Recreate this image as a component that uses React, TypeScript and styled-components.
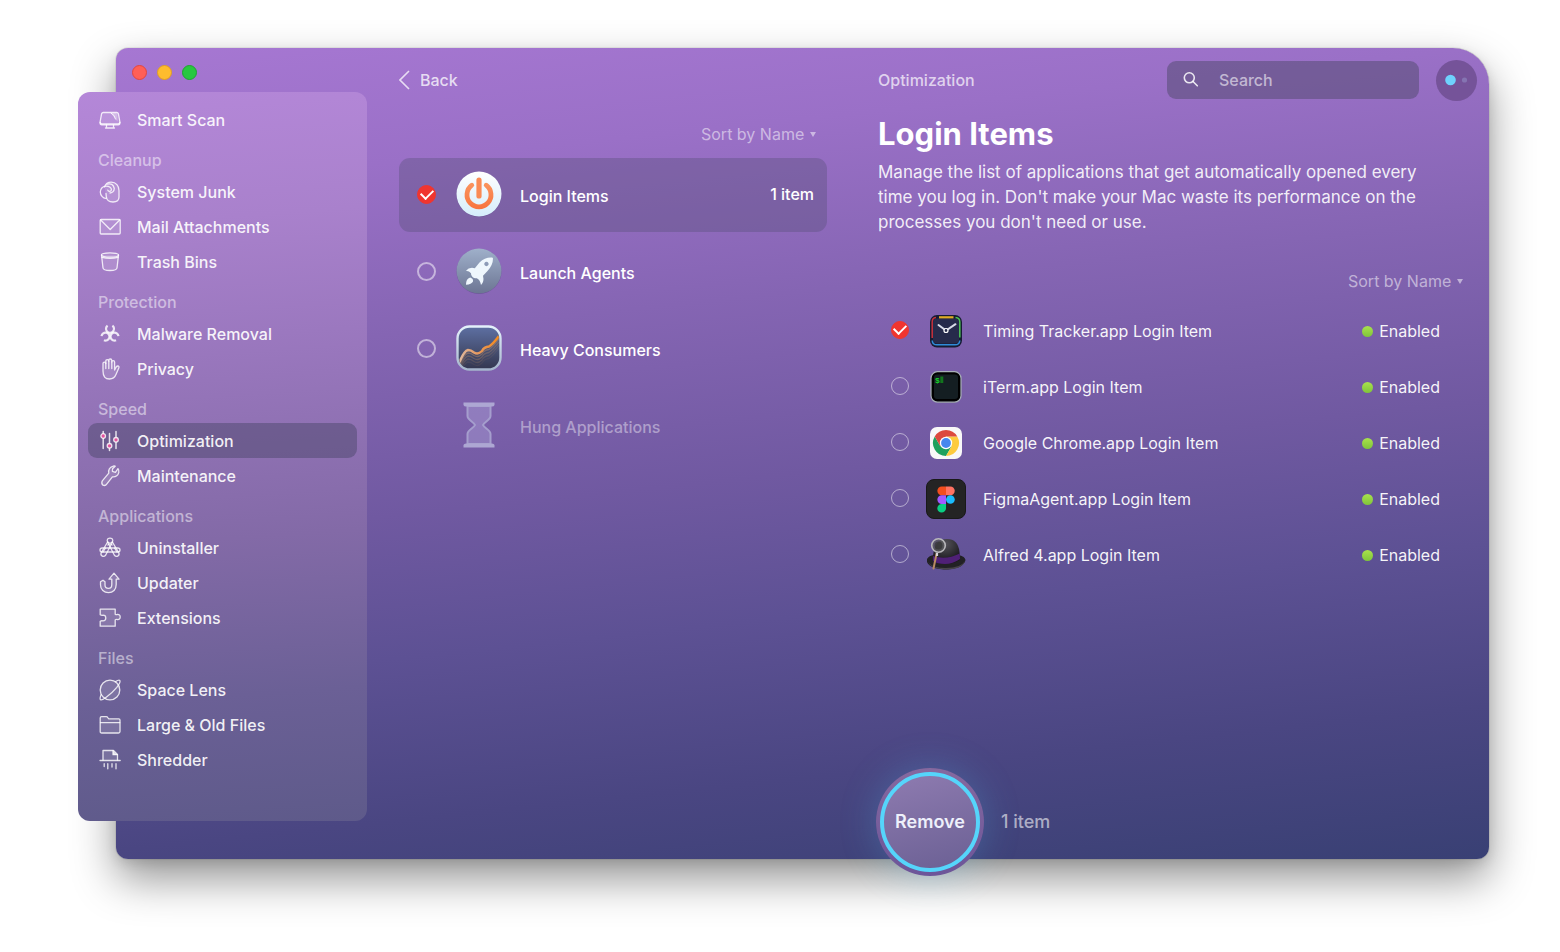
import React, { useState } from "react";
import styled, { createGlobalStyle, css } from "styled-components";

const GlobalStyle = createGlobalStyle`
  * { box-sizing: border-box; }
  body {
    margin: 0;
    background: #fff;
    color: #fff;
    font-family: Inter, "Liberation Sans", sans-serif;
    font-size: 16px;
    line-height: 20px;
  }
  button, input, select { font: inherit; color: inherit; }
`;

const Page = styled.div`
  min-height: 100vh;
  padding: 48px 71px 93px 116px;
  display: flex;
`;

const AppWindow = styled.div`
  flex: 1;
  min-width: 0;
  display: grid;
  grid-template-columns: 251px minmax(0, 511fr) minmax(0, 611fr);
  border-radius: 12px 36px 12px 12px;
  background: linear-gradient(174deg, #a677d2 0%, #9a70c7 15%, #8565b3 33%, #7059a1 52%, #5d5194 67%, #4a4682 84%, #394074 100%);
  box-shadow: 0 0 1px rgba(0, 0, 0, 0.6), 0 20px 44px rgba(0, 0, 0, 0.42), 0 4px 12px rgba(0, 0, 0, 0.1);
`;

const SideColumn = styled.div`
  display: flex;
  flex-direction: column;
  padding-bottom: 38px;
`;

const TrafficLights = styled.div`
  display: flex;
  gap: 10px;
  padding: 17px 16px 12px;
`;

const Light = styled.button<{ $fill: string; $edge: string }>`
  width: 15px;
  height: 15px;
  padding: 0;
  border: 1px solid ${(p) => p.$edge};
  border-radius: 50%;
  background: ${(p) => p.$fill};
`;

const Sidebar = styled.nav`
  flex: 1;
  margin-left: -38px;
  padding: 10px 10px 42px;
  border-radius: 12px;
  background: linear-gradient(176deg, #b487d8 0%, #a981cc 18%, #9b78bf 34%, #836aa7 61%, #6b6096 82%, #5e5a8a 100%);
`;

const GroupTitle = styled.h2`
  margin: 0;
  padding: 14px 10px 5px;
  font-size: 16px;
  font-weight: 500;
  line-height: 18px;
  color: rgba(255, 255, 255, 0.5);
`;

const NavItem = styled.button<{ $active?: boolean }>`
  display: flex;
  align-items: center;
  gap: 16px;
  width: 100%;
  height: 35px;
  padding: 0 11px;
  border: 0;
  border-radius: 9px;
  background: ${(p) => (p.$active ? "rgba(64, 64, 96, 0.42)" : "transparent")};
  color: rgba(255, 255, 255, 0.92);
  font-weight: 500;
  text-align: left;
  svg { flex: none; overflow: visible; }
`;

const ListColumn = styled.section`
  padding: 0 51px 0 32px;
`;

const HeaderBar = styled.header`
  display: flex;
  align-items: center;
  height: 64px;
  color: rgba(255, 255, 255, 0.7);
  font-weight: 500;
`;

const BackButton = styled.button`
  display: flex;
  align-items: center;
  gap: 10px;
  padding: 0;
  border: 0;
  background: none;
  color: rgba(255, 255, 255, 0.75);
  font-weight: 500;
`;

const SortBar = styled.div<{ $inset: number }>`
  display: flex;
  justify-content: flex-end;
  align-items: center;
  height: 44px;
  padding-right: ${(p) => p.$inset}px;
  color: rgba(255, 255, 255, 0.5);
`;

const SortLabel = styled.label`
  display: flex;
  align-items: center;
  gap: 5px;
`;

const SortSelect = styled.select`
  appearance: none;
  padding: 0;
  border: 0;
  background: none;
  color: rgba(255, 255, 255, 0.52);
  option { color: #222; }
`;

const CategoryList = styled.ul`
  display: grid;
  gap: 3px;
  margin: 2px 0 0;
  padding: 0;
  list-style: none;
`;

const CategoryRow = styled.label<{ $active?: boolean; $muted?: boolean }>`
  display: grid;
  grid-template-columns: 20px 46px 1fr auto;
  align-items: center;
  height: 74px;
  padding: 0 13px 2px 18px;
  border-radius: 11px;
  font-weight: 500;
  ${(p) => p.$active && css`background: rgba(78, 74, 110, 0.32);`}
  ${(p) => p.$muted && css`color: rgba(255, 255, 255, 0.42);`}
`;

const CategoryIcon = styled.span`
  grid-column: 2;
  display: flex;
  margin-left: 19px;
  width: 46px;
`;

const CategoryName = styled.span`
  padding: 3px 0 0 37px;
`;

const Tick = styled.input`
  appearance: none;
  display: grid;
  place-items: center;
  width: 19px;
  height: 19px;
  margin: 0;
  border: 2px solid rgba(255, 255, 255, 0.5);
  border-radius: 50%;
  &:checked {
    border-color: #f0352f;
    border-width: 1px;
    background: #f0352f;
  }
  &:checked::after {
    content: "";
    width: 6px;
    height: 10px;
    margin-top: -3px;
    border: solid #fff;
    border-width: 0 2px 2px 0;
    transform: rotate(45deg);
  }
`;

const DetailColumn = styled.section`
  display: flex;
  flex-direction: column;
  min-width: 0;
`;

const SearchBox = styled.label`
  display: flex;
  align-items: center;
  gap: 20px;
  width: 252px;
  height: 38px;
  margin-left: auto;
  padding: 0 16px;
  border-radius: 9px;
  background: rgba(82, 74, 112, 0.52);
`;

const SearchInput = styled.input`
  flex: 1;
  min-width: 0;
  padding: 0;
  border: 0;
  outline: 0;
  background: none;
  font-weight: 500;
  &::placeholder { color: rgba(255, 255, 255, 0.58); }
`;

const AssistantButton = styled.button`
  display: flex;
  align-items: center;
  justify-content: center;
  width: 41px;
  height: 41px;
  margin: 0 12px 0 17px;
  padding: 0;
  border: 0;
  border-radius: 50%;
  background: #755399;
`;

const Title = styled.h1`
  margin: 4px 0 8px;
  font-size: 31px;
  line-height: 36px;
  font-weight: 700;
`;

const Description = styled.p`
  margin: 0;
  max-width: 560px;
  padding: 0 10px 24px 0;
  font-size: 17px;
  line-height: 25px;
  color: rgba(255, 255, 255, 0.9);
`;

const ItemList = styled.ul`
  margin: 0;
  padding: 0;
  list-style: none;
`;

const ItemRow = styled.label`
  display: flex;
  align-items: center;
  height: 56px;
  padding: 0 49px 0 13px;
  color: rgba(255, 255, 255, 0.94);
  ${Tick} { border-width: 1px; margin-bottom: 3px; width: 18px; height: 18px; }
`;

const AppIcon = styled.span`
  display: flex;
  margin: 0 17px;
`;

const Status = styled.span`
  display: flex;
  align-items: center;
  gap: 6px;
  margin-left: auto;
  &::before {
    content: "";
    width: 11px;
    height: 11px;
    border-radius: 50%;
    background: linear-gradient(#a9e24c, #7fc53a);
  }
`;

const ActionBar = styled.footer`
  display: flex;
  align-items: center;
  gap: 17px;
  margin: auto 0 -17px -2px;
  font-size: 18px;
  font-weight: 500;
  color: rgba(255, 255, 255, 0.58);
`;

const RemoveButton = styled.button`
  width: 108px;
  height: 108px;
  padding: 4px;
  border: 0;
  border-radius: 50%;
  background: linear-gradient(#85699f, #6c5599);
  box-shadow: 0 0 36px rgba(80, 190, 240, 0.26);
`;

const RemoveFace = styled.span`
  display: grid;
  place-items: center;
  width: 100%;
  height: 100%;
  border: 4px solid #55d5fb;
  border-radius: 50%;
  background: linear-gradient(165deg, #8e7bb0, #6b6094);
  color: #eef0fb;
  font-size: 18px;
  font-weight: 600;
`;

const Line = ({ children }: { children: React.ReactNode }) => (
  <svg width="22" height="22" viewBox="0 0 22 22" fill="rgba(255,255,255,0.12)" stroke="rgba(255,255,255,0.82)" strokeWidth="1.3" strokeLinejoin="round" strokeLinecap="round" aria-hidden="true">
    {children}
  </svg>
);

const navIcons: Record<string, React.ReactNode> = {
  "Smart Scan": (
    <Line>
      <path d="M4.2 3.5H17.8Q19 3.5 19.4 4.7L21 13.5Q21 15.7 19.2 15.8H2.8Q1 15.7 1 13.5L2.6 4.7Q3 3.5 4.2 3.5Z" />
      <path d="M1.2 13.3Q1.5 15 3 15H19Q20.5 15 20.8 13.3M7.5 16V18.3M14.5 16V18.3M6.5 19H15.5" fill="none" />
      <path d="M11.5 4L18.5 12.5V5L16.8 3.8Z" fill="rgba(255,255,255,.35)" stroke="none" />
      <path d="M12 4Q16 6 16.5 10" fill="none" strokeWidth="1" />
    </Line>
  ),
  "System Junk": (
    <Line>
      <path d="M5.5 6C6.5 3 9 1.2 12.3 1.2C17 1.2 20 5 20 9.5V16C20 19.2 17.5 21 14 21C10 21 7.6 19 7.3 15.8L7 12.5" />
      <path d="M7.2 17.2C4.5 17.8 1.3 14.5 1.3 11C1.3 7.5 4 5.2 7 5.2C10.5 5.2 12.6 7 12.4 8.8C12 10.8 9.3 11 8.8 9.2M8 3.2Q14 1.5 15.3 7.5Q15 11.5 11 12" fill="none" />
    </Line>
  ),
  "Mail Attachments": (
    <Line>
      <rect x="1.2" y="3.5" width="20" height="14.5" rx="1" />
      <path d="M1.7 4L11.2 13.5L20.7 4" fill="none" />
    </Line>
  ),
  "Trash Bins": (
    <Line>
      <path d="M2.5 4L4 17Q4.3 19.5 11 19.5Q17.7 19.5 18 17L19.5 4" />
      <ellipse cx="11" cy="4" rx="8.5" ry="2.2" />
      <path d="M3 6.3Q11 8.5 19 6.3" fill="none" />
    </Line>
  ),
  "Malware Removal": (
    <Line>
      <g fill="none" strokeWidth="2.2" strokeLinecap="butt">
        <path d="M8.6 2.6A4 4 0 1 0 13.4 2.6" />
        <path d="M8.6 2.6A4 4 0 1 0 13.4 2.6" transform="rotate(120 11 11)" />
        <path d="M8.6 2.6A4 4 0 1 0 13.4 2.6" transform="rotate(240 11 11)" />
      </g>
    </Line>
  ),
  Privacy: (
    <Line>
      <path d="M4 13V5.6Q4 4.2 5.4 4.2Q6.8 4.2 6.8 5.6V3.2Q6.8 1.7 8.3 1.7Q9.8 1.7 9.8 3.2V2.4Q9.8 1 11.3 1Q12.8 1 12.8 2.4V4Q12.8 2.7 14.2 2.7Q15.6 2.7 15.6 4V12L17.2 9Q18.2 7.6 19.6 8.2Q20.4 8.7 19.9 9.8L17 16.5Q15.2 21 10.5 21Q4 21 4 13Z" />
      <path d="M6.8 5V10.5M9.8 3V10.5M12.8 4V10.5" fill="none" />
    </Line>
  ),
  Optimization: (
    <Line>
      <path d="M4.2 1.5V4M4.2 8.5V18.5M10.5 3.5V13.5M10.5 18V20.5M17 1.5V7.5M17 12V18.5" strokeWidth="1.5" />
      <g fill="#e2549f">
        <circle cx="4.2" cy="6" r="2.3" />
        <circle cx="10.5" cy="15.8" r="2.3" />
        <circle cx="17" cy="9.8" r="2.3" />
      </g>
    </Line>
  ),
  Maintenance: (
    <Line>
      <path d="M14.2 1.2Q8.8 3 9.8 8.2L3.3 15.8Q2 18.6 4 20.2Q6.4 21.2 7.9 18.9L13.4 11.8Q18.4 12.2 19.8 7.6Q20.2 5.2 19 3.6L16.4 7.4L13.4 6.4L13.6 3.8L16.2 1.2Q15.2 .8 14.2 1.2Z" />
    </Line>
  ),
  Uninstaller: (
    <Line>
      <g fill="none">
        <path d="M8.6 2Q11 .4 13.4 2Q14.2 3.4 13.4 5L6.6 18.2Q5 20 3 18.9Q1.3 17.8 2.2 15.8L8.6 5Q7.8 3.4 8.6 2Z" />
        <path d="M13.4 5L19.8 15.8Q20.7 17.8 19 18.9Q17 20 15.4 18.2L8.6 5" />
        <path d="M3.2 11H18.8Q21 11 21 13Q21 15 18.8 15H3.2Q1 15 1 13Q1 11 3.2 11Z" />
        <path d="M8.8 5L13.2 8M13.2 5L8.8 8M4 15L6.5 11M18 15L15.5 11" />
      </g>
    </Line>
  ),
  Updater: (
    <Line>
      <path d="M15 1.2L20 7.2H17.2V12.5C17.2 17.5 14 20.7 9.5 20.7C5 20.7 1.5 17.5 1.5 13V9.8L4 8.2L6 9.8V13C6 15.2 7.5 16.4 9.5 16.4C11.8 16.4 12.8 15 12.8 12.5V7.2H10Z" />
    </Line>
  ),
  Extensions: (
    <Line>
      <path d="M1.2 2.2H16.2V7.2Q17 7.9 18.2 7.5Q21.2 7.2 21.2 10Q21.2 12.9 18.2 12.5Q17 12.1 16.2 12.9V19.2H1.2V14.2Q2.5 13.5 4 13.9Q6.8 13.7 6.8 10.9Q6.8 8.2 4 8.2Q2.5 8.5 1.2 7.7Z" />
    </Line>
  ),
  "Space Lens": (
    <Line>
      <circle cx="11" cy="11" r="9.8" />
      <path d="M2.2 15.5Q.4 19.5 1.5 20.7Q3 21.6 7.5 18Q13 14 17.8 8.3Q22 3 20.8 1.4Q19.8 .6 16.5 2.6" fill="none" />
    </Line>
  ),
  "Large & Old Files": (
    <Line>
      <path d="M1.2 17.5V4Q1.2 2.7 2.5 2.7H7.3Q8.2 2.7 9 3.8L9.8 4.8H19.8Q21 4.8 21 6V17.5Q21 19 19.5 19H2.7Q1.2 19 1.2 17.5Z" />
      <path d="M1.5 8.7H20.7" />
    </Line>
  ),
  Shredder: (
    <Line>
      <path d="M4 11V1.5H14.5L18.5 5.5V11" />
      <path d="M14 1.7V5.7H18.2" fill="rgba(255,255,255,.8)" />
      <path d="M1 11.5H21.2M5.2 14.7V17.5M8.8 14.7V19.8M13 14.7V18M17 14.7V19.8" fill="none" />
    </Line>
  ),
};

const navGroups: { title?: string; items: string[] }[] = [
  { items: ["Smart Scan"] },
  { title: "Cleanup", items: ["System Junk", "Mail Attachments", "Trash Bins"] },
  { title: "Protection", items: ["Malware Removal", "Privacy"] },
  { title: "Speed", items: ["Optimization", "Maintenance"] },
  { title: "Applications", items: ["Uninstaller", "Updater", "Extensions"] },
  { title: "Files", items: ["Space Lens", "Large & Old Files", "Shredder"] },
];

const PowerIcon = () => (
  <svg width="46" height="46" viewBox="0 0 46 46" aria-hidden="true">
    <defs>
      <linearGradient id="powerDisc" x2="0" y2="1"><stop stopColor="#fff" /><stop offset="1" stopColor="#d5edfb" /></linearGradient>
      <linearGradient id="powerMark" gradientUnits="userSpaceOnUse" x1="0" y1="7" x2="0" y2="38"><stop stopColor="#fb9a64" /><stop offset="1" stopColor="#f8743f" /></linearGradient>
    </defs>
    <circle cx="23" cy="23.4" r="22.5" fill="rgba(50,30,90,.25)" />
    <circle cx="23" cy="23" r="22.5" fill="url(#powerDisc)" />
    <path d="M15.8 14.2A12 12 0 1 0 30.2 14.2" fill="none" stroke="url(#powerMark)" strokeWidth="4.8" strokeLinecap="round" />
    <path d="M23 9V25" fill="none" stroke="#fa8a54" strokeWidth="5.2" strokeLinecap="round" />
  </svg>
);

const RocketIcon = () => (
  <svg width="46" height="46" viewBox="0 0 46 46" aria-hidden="true">
    <defs>
      <linearGradient id="rocketDisc" x2="0" y2="1"><stop stopColor="#9fb0ca" /><stop offset="1" stopColor="#6c7593" /></linearGradient>
    </defs>
    <circle cx="23" cy="23.4" r="22.5" fill="rgba(50,30,90,.3)" />
    <circle cx="23" cy="23" r="22.5" fill="url(#rocketDisc)" />
    <g fill="#eff7fd">
      <path fillRule="evenodd" d="M36 9.5Q29 9 23.5 14.5L18.8 20.2Q13 18.8 10 22.8Q13.5 23 15 25.2Q14.8 27.5 16.5 29Q18.3 30.7 20.8 30.2Q24.2 31.8 25 37Q28.5 34 27 27.8L31.5 23Q37 17 37 10.5Q36.8 9.5 36 9.5ZM30.5 13.8A2.2 2.2 0 1 1 30.4 13.8Z" />
      <path d="M14.2 29.5Q17.5 30.5 17 33.5Q15.5 36.5 10 36.8Q9.8 31 14.2 29.5Z" />
    </g>
  </svg>
);

const ChartIcon = () => (
  <svg width="46" height="46" viewBox="0 0 46 46" aria-hidden="true">
    <defs>
      <linearGradient id="chartFace" x2="0" y2="1"><stop stopColor="#5e70a3" /><stop offset=".55" stopColor="#465073" /><stop offset="1" stopColor="#33364f" /></linearGradient>
      <linearGradient id="chartEdge" x2="0" y2="1"><stop stopColor="#e4f1fb" /><stop offset="1" stopColor="#a5b5cc" /></linearGradient>
      <linearGradient id="chartLine"><stop stopColor="#dfb9a0" /><stop offset=".5" stopColor="#e6975b" /><stop offset="1" stopColor="#f58a1b" /></linearGradient>
      <clipPath id="chartClip"><rect x="3" y="3" width="40" height="40" rx="10" /></clipPath>
    </defs>
    <rect x="1.5" y="1.5" width="43" height="43" rx="12" fill="url(#chartFace)" stroke="url(#chartEdge)" strokeWidth="2.4" />
    <g clipPath="url(#chartClip)" fill="none">
      {[12, 9, 6, 3].map((dy, i) => (
        <path key={dy} d="M3 38Q8 26 12 25Q15 25 18 27.5Q22 30 26 26Q28 22 33 21.5Q37 19 43 11" transform={`translate(0 ${dy})`} stroke="#b98a66" strokeOpacity={0.1 + i * 0.12} strokeWidth="1.3" />
      ))}
      <path d="M3 38Q8 26 12 25Q15 25 18 27.5Q22 30 26 26Q28 22 33 21.5Q37 19 43 11" stroke="url(#chartLine)" strokeWidth="2.4" />
    </g>
  </svg>
);

const HourglassIcon = () => (
  <svg width="46" height="46" viewBox="0 0 46 46" aria-hidden="true">
    <g fill="rgba(200,200,240,.28)" stroke="#a59ecd" strokeWidth="2">
      <path d="M11.5 4H34.5V14C34.5 18 28 20 27 23C28 26 34.5 28 34.5 32V42H11.5V32C11.5 28 18 26 19 23C18 20 11.5 18 11.5 14Z" />
    </g>
    <path d="M7.5 .5H38.5V3Q38 4.5 36 4.5H10Q8 4.5 7.5 3ZM7.5 45.5H38.5V43Q38 41.5 36 41.5H10Q8 41.5 7.5 43Z" fill="#ada7d3" />
  </svg>
);

const TimingIcon = () => (
  <svg width="40" height="40" viewBox="0 0 40 40" aria-hidden="true">
    <rect x="4" y="4" width="32" height="32.5" rx="7" fill="#171c33" />
    <rect x="7" y="7.5" width="26" height="25" rx="4" fill="#262b4b" />
    <g fill="none" strokeWidth="1.5">
      <path d="M6.2 27V11Q6.2 7 10 6.6" stroke="#c8313c" />
      <path d="M13 6.3H27.5" stroke="#e0ac24" strokeWidth="2.2" />
      <path d="M29.5 6.6Q33.8 7 33.8 11V26.5" stroke="#4dc556" />
      <path d="M6.2 29.5Q6.5 33.8 11 33.8H29Q33.5 33.8 33.8 29.5" stroke="#2f8bd8" />
    </g>
    <path d="M12.5 14L20 19.5L29.5 13.2" fill="none" stroke="#d8dce8" strokeWidth="2" strokeLinecap="round" />
    <circle cx="20" cy="19.5" r="2" fill="#262b4b" stroke="#fff" strokeWidth="1.2" />
  </svg>
);

const ItermIcon = () => (
  <svg width="40" height="40" viewBox="0 0 40 40" aria-hidden="true">
    <rect x="5" y="4.7" width="30" height="30.5" rx="6.5" fill="#000" stroke="#a8b0b8" strokeWidth="1.2" />
    <rect x="8" y="7.5" width="24" height="24.5" rx="3" fill="#141e22" />
    <text x="9" y="15.5" fill="#17d22a" fontFamily="Liberation Mono, monospace" fontSize="8" fontWeight="700">$</text>
    <rect x="14.3" y="9.5" width="3" height="6.5" fill="#12751d" />
  </svg>
);

const ChromeIcon = () => (
  <svg width="40" height="40" viewBox="-4 -4 40 40" aria-hidden="true">
    <rect width="32" height="32" rx="7" fill="#f8f8f8" />
    <path d="M4.74 9.5A13 13 0 0 0 16 29L21.63 19.25H10.37Z" fill="#1fa15d" />
    <path d="M27.26 9.5A13 13 0 0 1 16 29L21.63 19.25L16 9.5Z" fill="#fdcb3e" />
    <path d="M4.74 9.5A13 13 0 0 1 27.26 9.5H16L10.37 19.25Z" fill="#dc4a3e" />
    <circle cx="16" cy="16" r="6.2" fill="#fff" />
    <circle cx="16" cy="16" r="4.9" fill="#4688ee" />
  </svg>
);

const FigmaIcon = () => (
  <svg width="40" height="40" viewBox="0 0 40 40" aria-hidden="true">
    <rect x=".5" y=".5" width="39" height="39" rx="7.5" fill="#242424" stroke="#191919" />
    <path d="M15.7 7.5H20V16.2H15.7A4.35 4.35 0 0 1 15.7 7.5Z" fill="#f24e1e" />
    <path d="M20 7.5H24.4A4.35 4.35 0 0 1 24.4 16.2H20Z" fill="#ff7262" />
    <path d="M15.7 16.2H20V24.9H15.7A4.35 4.35 0 0 1 15.7 16.2Z" fill="#a259ff" />
    <circle cx="24.4" cy="20.5" r="4.35" fill="#1abcfe" />
    <path d="M15.7 24.9H20V29.3A4.35 4.35 0 1 1 15.7 24.9Z" fill="#0acf83" />
  </svg>
);

const AlfredIcon = () => (
  <svg width="40" height="40" viewBox="0 0 40 40" aria-hidden="true">
    <defs>
      <radialGradient id="hatCrown" cx=".45" cy=".2" r=".7"><stop stopColor="#55535a" /><stop offset="1" stopColor="#19181c" /></radialGradient>
    </defs>
    <path d="M1 24Q3 20.5 8 20H33Q39 21.5 39.5 25Q38 33 22 34.5Q4 34.5 1 27Z" fill="#222125" />
    <path d="M2 27Q6 33 20 33Q35 33 39 26Q36 34.5 20 34.5Q5 34 2 27Z" fill="#48454b" />
    <path d="M7 22Q8 4 21 4Q32 4 33.5 17L34 25Q28 29 19 29Q11 29 7 26Z" fill="url(#hatCrown)" />
    <path d="M7 21Q20 25.5 33.8 18.5L34 24Q27 29 19 29Q11 29 7 26Z" fill="#4f2077" />
    <path d="M10.5 19L7.5 33.5" stroke="#b98a63" strokeWidth="2" strokeLinecap="round" />
    <circle cx="12.5" cy="10.5" r="6.8" fill="rgba(90,90,92,.75)" stroke="#b9b8bb" strokeWidth="1.6" />
    <circle cx="12.5" cy="10.5" r="4" fill="rgba(30,30,32,.45)" />
    <path d="M11 17.8V21" stroke="#d6d4d8" strokeWidth="2.2" />
  </svg>
);

const categories = [
  { name: "Login Items", icon: <PowerIcon />, count: "1 item" },
  { name: "Launch Agents", icon: <RocketIcon /> },
  { name: "Heavy Consumers", icon: <ChartIcon /> },
  { name: "Hung Applications", icon: <HourglassIcon />, muted: true },
];

const loginItems = [
  { name: "Timing Tracker.app Login Item", icon: <TimingIcon /> },
  { name: "iTerm.app Login Item", icon: <ItermIcon /> },
  { name: "Google Chrome.app Login Item", icon: <ChromeIcon /> },
  { name: "FigmaAgent.app Login Item", icon: <FigmaIcon /> },
  { name: "Alfred 4.app Login Item", icon: <AlfredIcon /> },
];

const Sort = ({ inset, name }: { inset: number; name: string }) => (
  <SortBar $inset={inset}>
    <SortLabel>
      <SortSelect aria-label={name}>
        <option>Sort by Name</option>
      </SortSelect>
      <svg width="6" height="6" viewBox="0 0 6 6" aria-hidden="true"><path d="M0 1H6L3 6Z" fill="currentColor" /></svg>
    </SortLabel>
  </SortBar>
);

export default function App() {
  const [section, setSection] = useState("Optimization");
  return (
    <>
      <GlobalStyle />
      <Page>
        <AppWindow>
          <SideColumn>
            <TrafficLights>
              <Light aria-label="Close" $fill="#ff5f57" $edge="#e2463f" />
              <Light aria-label="Minimize" $fill="#febc2e" $edge="#e09e24" />
              <Light aria-label="Zoom" $fill="#28c840" $edge="#1fa530" />
            </TrafficLights>
            <Sidebar>
              {navGroups.map((group) => (
                <div key={group.items[0]}>
                  {group.title && <GroupTitle>{group.title}</GroupTitle>}
                  {group.items.map((item) => (
                    <NavItem key={item} $active={item === section} onClick={() => setSection(item)}>
                      {navIcons[item]}
                      {item}
                    </NavItem>
                  ))}
                </div>
              ))}
            </Sidebar>
          </SideColumn>

          <ListColumn>
            <HeaderBar>
              <BackButton>
                <svg width="11" height="20" viewBox="0 0 11 20" fill="none" stroke="currentColor" strokeWidth="1.6" aria-hidden="true"><path d="M10 1L1 10L10 19" /></svg>
                Back
              </BackButton>
            </HeaderBar>
            <Sort inset={11} name="Sort categories" />
            <CategoryList>
              {categories.map((c, i) => (
                <li key={c.name}>
                  <CategoryRow $active={i === 0} $muted={c.muted}>
                    {!c.muted && <Tick type="checkbox" defaultChecked={i === 0} />}
                    <CategoryIcon>{c.icon}</CategoryIcon>
                    <CategoryName>{c.name}</CategoryName>
                    {c.count && <span>{c.count}</span>}
                  </CategoryRow>
                </li>
              ))}
            </CategoryList>
          </ListColumn>

          <DetailColumn>
            <HeaderBar>
              Optimization
              <SearchBox>
                <svg width="16" height="16" viewBox="0 0 16 16" fill="none" stroke="rgba(255,255,255,0.85)" strokeWidth="1.6" strokeLinecap="round" aria-hidden="true"><circle cx="6.3" cy="5.8" r="5" /><path d="M10 9.5L14.3 13.8" /></svg>
                <SearchInput type="search" placeholder="Search" aria-label="Search" />
              </SearchBox>
              <AssistantButton aria-label="Assistant">
                <svg width="26" height="12" viewBox="0 0 26 12" aria-hidden="true"><circle cx="6.5" cy="6" r="5.3" fill="#6fd2fd" /><circle cx="20.5" cy="6" r="2.6" fill="#8574b2" /></svg>
              </AssistantButton>
            </HeaderBar>
            <Title>Login Items</Title>
            <Description>
              Manage the list of applications that get automatically opened every time you log in. Don't make your Mac waste its performance on the processes you don't need or use.
            </Description>
            <Sort inset={26} name="Sort login items" />
            <ItemList>
              {loginItems.map((item, i) => (
                <li key={item.name}>
                  <ItemRow>
                    <Tick type="checkbox" defaultChecked={i === 0} />
                    <AppIcon>{item.icon}</AppIcon>
                    {item.name}
                    <Status>Enabled</Status>
                  </ItemRow>
                </li>
              ))}
            </ItemList>
            <ActionBar>
              <RemoveButton>
                <RemoveFace>Remove</RemoveFace>
              </RemoveButton>
              1 item
            </ActionBar>
          </DetailColumn>
        </AppWindow>
      </Page>
    </>
  );
}
